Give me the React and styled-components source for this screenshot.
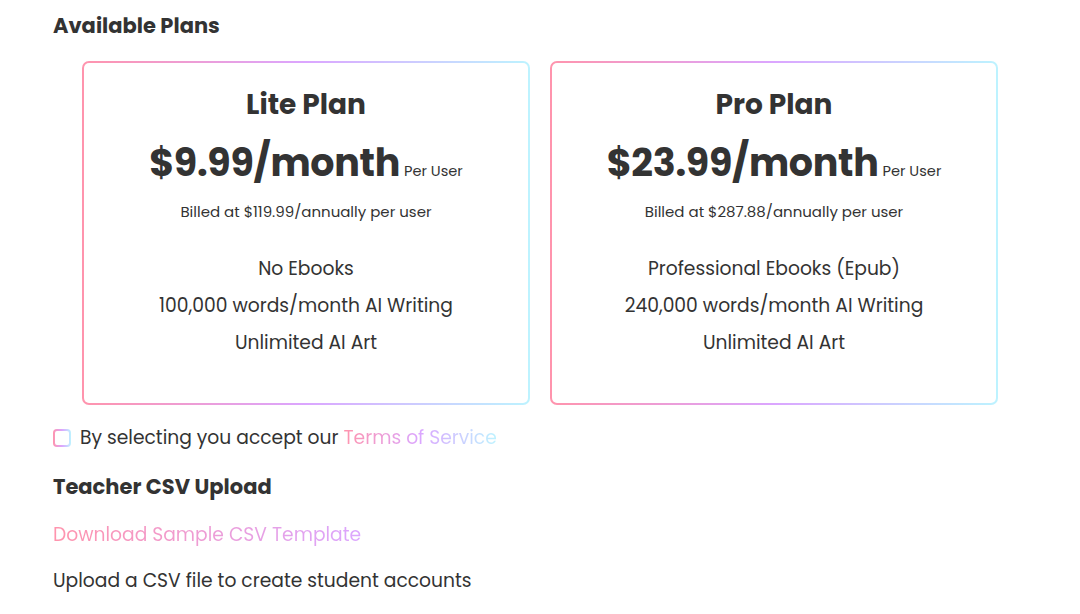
import styled, { createGlobalStyle } from 'styled-components';

const GlobalStyle = createGlobalStyle`
    body {
        margin: 0;
        background: #ffffff;
        font-family: "Poppins", "Open Sans", "Noto Sans", sans-serif;
        color: #333333;
    }
`;

const brand = 'linear-gradient(90deg, #ff94ad 0%, #dba6ff 50%, #bdf3ff 100%)';

const Page = styled.div`
    padding: 12px 53px 0 53px;
    width: 1080px;
    box-sizing: border-box;
`;

const Heading = styled.h2`
    margin: 0;
    font-size: 21px;
    font-weight: 700;
    line-height: 28px;
    color: #333;
`;

const Plans = styled.div`
    display: flex;
    gap: 20px;
    padding: 21px 0 0 29px;
`;

const Card = styled.div`
    width: 448px;
    height: 344px;
    box-sizing: border-box;
    border: 2px solid transparent;
    border-radius: 7px;
    background: linear-gradient(#fff, #fff) padding-box, ${brand} border-box;
    display: flex;
    flex-direction: column;
    align-items: center;
    padding-top: 24px;
`;

const PlanName = styled.div`
    font-size: 28px;
    font-weight: 700;
    line-height: 36px;
`;

const PriceRow = styled.div`
    display: flex;
    align-items: baseline;
    margin-top: 15px;
`;

const Price = styled.span`
    font-size: 38px;
    font-weight: 700;
    line-height: 50px;
    letter-spacing: -0.3px;
`;

const PerUser = styled.span`
    font-size: 14.6px;
    margin-left: 4px;
`;

const Billed = styled.div`
    font-size: 15px;
    line-height: 20px;
    margin-top: 14px;
`;

const Features = styled.ul`
    list-style: none;
    margin: 34px 0 0 0;
    padding: 0;
    display: flex;
    flex-direction: column;
    align-items: center;
    gap: 11px;
`;

const Feature = styled.li`
    font-size: 18.7px;
    line-height: 26px;
`;

const AcceptRow = styled.label`
    display: flex;
    align-items: center;
    gap: 9px;
    margin-top: 20px;
    font-size: 18.7px;
    line-height: 26px;
`;

const Box = styled.span`
    width: 18px;
    height: 18px;
    box-sizing: border-box;
    border: 2px solid transparent;
    border-radius: 4px;
    background: linear-gradient(#fff, #fff) padding-box, ${brand} border-box;
`;

const GradientText = styled.a`
    background: ${brand};
    -webkit-background-clip: text;
    background-clip: text;
    color: transparent;
    text-decoration: none;
`;

const Section = styled.div`
    margin-top: 22px;
`;

const Download = styled(GradientText)`
    display: block;
    width: 620px;
    margin-top: 21px;
    font-size: 18.7px;
    line-height: 26px;
`;

const Note = styled.p`
    margin: 20px 0 0 0;
    font-size: 18.7px;
    line-height: 26px;
`;

const plans = [
    {
        name: 'Lite Plan',
        price: '$9.99/month',
        billed: 'Billed at $119.99/annually per user',
        features: ['No Ebooks', '100,000 words/month AI Writing', 'Unlimited AI Art'],
    },
    {
        name: 'Pro Plan',
        price: '$23.99/month',
        billed: 'Billed at $287.88/annually per user',
        features: ['Professional Ebooks (Epub)', '240,000 words/month AI Writing', 'Unlimited AI Art'],
    },
];

const App = () => {
    return (
        <Page>
            <GlobalStyle />
            <Heading>Available Plans</Heading>
            <Plans>
                {plans.map((plan) => (
                    <Card key={plan.name}>
                        <PlanName>{plan.name}</PlanName>
                        <PriceRow>
                            <Price>{plan.price}</Price>
                            <PerUser>Per User</PerUser>
                        </PriceRow>
                        <Billed>{plan.billed}</Billed>
                        <Features>
                            {plan.features.map((f) => (
                                <Feature key={f}>{f}</Feature>
                            ))}
                        </Features>
                    </Card>
                ))}
            </Plans>
            <AcceptRow>
                <Box />
                <span>
                    By selecting you accept our <GradientText href="#">Terms of Service</GradientText>
                </span>
            </AcceptRow>
            <Section>
                <Heading>Teacher CSV Upload</Heading>
                <Download href="#">Download Sample CSV Template</Download>
                <Note>Upload a CSV file to create student accounts</Note>
            </Section>
        </Page>
    );
};

export default App;
